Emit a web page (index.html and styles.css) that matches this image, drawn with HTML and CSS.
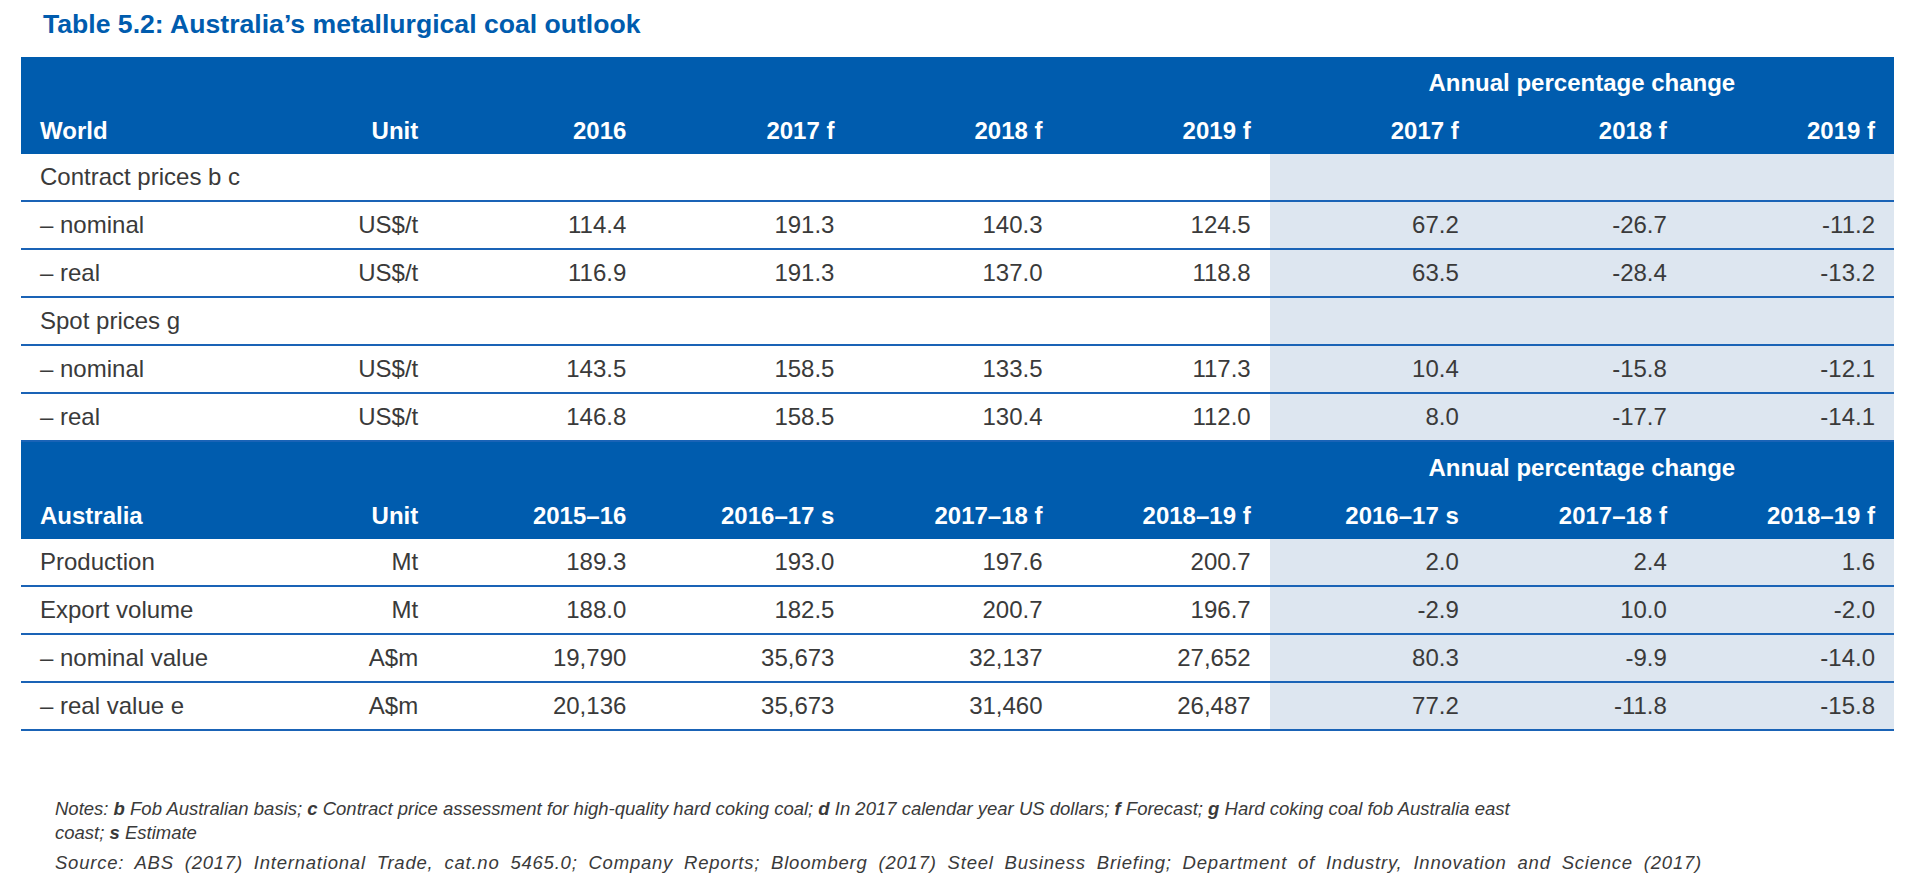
FILE: index.html
```html
<!DOCTYPE html>
<html lang="en">
<head>
<meta charset="utf-8">
<title>Table 5.2: Australia’s metallurgical coal outlook</title>
<link rel="stylesheet" href="styles.css">
</head>
<body>
<div class="page">
  <h1 class="title">Table 5.2: Australia’s metallurgical coal outlook</h1>
  <table class="outlook">
    <colgroup>
      <col><col><col><col><col><col><col><col><col>
    </colgroup>
    <tbody>
      <tr class="head-top">
        <th colspan="6"></th>
        <th colspan="3" class="apc">Annual percentage change</th>
      </tr>
      <tr class="head-main">
        <th class="lbl">World</th>
        <th>Unit</th>
        <th>2016</th>
        <th>2017 f</th>
        <th>2018 f</th>
        <th>2019 f</th>
        <th>2017 f</th>
        <th>2018 f</th>
        <th>2019 f</th>
      </tr>
      <tr>
        <td class="lbl">Contract prices b c</td>
        <td></td><td></td><td></td><td></td><td></td>
        <td class="sh"></td><td class="sh"></td><td class="sh"></td>
      </tr>
      <tr>
        <td class="lbl">– nominal</td>
        <td>US$/t</td><td>114.4</td><td>191.3</td><td>140.3</td><td>124.5</td>
        <td class="sh">67.2</td><td class="sh">-26.7</td><td class="sh">-11.2</td>
      </tr>
      <tr>
        <td class="lbl">– real</td>
        <td>US$/t</td><td>116.9</td><td>191.3</td><td>137.0</td><td>118.8</td>
        <td class="sh">63.5</td><td class="sh">-28.4</td><td class="sh">-13.2</td>
      </tr>
      <tr>
        <td class="lbl">Spot prices g</td>
        <td></td><td></td><td></td><td></td><td></td>
        <td class="sh"></td><td class="sh"></td><td class="sh"></td>
      </tr>
      <tr>
        <td class="lbl">– nominal</td>
        <td>US$/t</td><td>143.5</td><td>158.5</td><td>133.5</td><td>117.3</td>
        <td class="sh">10.4</td><td class="sh">-15.8</td><td class="sh">-12.1</td>
      </tr>
      <tr>
        <td class="lbl">– real</td>
        <td>US$/t</td><td>146.8</td><td>158.5</td><td>130.4</td><td>112.0</td>
        <td class="sh">8.0</td><td class="sh">-17.7</td><td class="sh">-14.1</td>
      </tr>
      <tr class="head-top">
        <th colspan="6"></th>
        <th colspan="3" class="apc">Annual percentage change</th>
      </tr>
      <tr class="head-main">
        <th class="lbl">Australia</th>
        <th>Unit</th>
        <th>2015–16</th>
        <th>2016–17 s</th>
        <th>2017–18 f</th>
        <th>2018–19 f</th>
        <th>2016–17 s</th>
        <th>2017–18 f</th>
        <th>2018–19 f</th>
      </tr>
      <tr>
        <td class="lbl">Production</td>
        <td>Mt</td><td>189.3</td><td>193.0</td><td>197.6</td><td>200.7</td>
        <td class="sh">2.0</td><td class="sh">2.4</td><td class="sh">1.6</td>
      </tr>
      <tr>
        <td class="lbl">Export volume</td>
        <td>Mt</td><td>188.0</td><td>182.5</td><td>200.7</td><td>196.7</td>
        <td class="sh">-2.9</td><td class="sh">10.0</td><td class="sh">-2.0</td>
      </tr>
      <tr>
        <td class="lbl">– nominal value</td>
        <td>A$m</td><td>19,790</td><td>35,673</td><td>32,137</td><td>27,652</td>
        <td class="sh">80.3</td><td class="sh">-9.9</td><td class="sh">-14.0</td>
      </tr>
      <tr>
        <td class="lbl">– real value e</td>
        <td>A$m</td><td>20,136</td><td>35,673</td><td>31,460</td><td>26,487</td>
        <td class="sh">77.2</td><td class="sh">-11.8</td><td class="sh">-15.8</td>
      </tr>
    </tbody>
  </table>
  <div class="notes">
    <p class="note">Notes: <b>b</b> Fob Australian basis; <b>c</b> Contract price assessment for high-quality hard coking coal; <b>d</b> In 2017 calendar year US dollars; <b>f</b> Forecast; <b>g</b> Hard coking coal fob Australia east coast; <b>s</b> Estimate</p>
    <p class="source">Source: ABS (2017) International Trade, cat.no 5465.0; Company Reports; Bloomberg (2017) Steel Business Briefing; Department of Industry, Innovation and Science (2017)</p>
  </div>
</div>
</body>
</html>
```

FILE: styles.css
```css
html, body {
  margin: 0;
  padding: 0;
  background: #ffffff;
}

.page {
  padding: 9px 0 0 21px;
  font-family: "Liberation Sans", Arial, sans-serif;
  color: #3a3a3a;
}

.title {
  margin: 0 0 18px 22px;
  font-size: 26.6px;
  line-height: 30px;
  font-weight: bold;
  color: #005cae;
}

.outlook {
  width: 1873px;
  table-layout: fixed;
  border-collapse: separate;
  border-spacing: 0;
  font-size: 24px;
}

.outlook th,
.outlook td {
  box-sizing: border-box;
  padding: 0 19px 0 19px;
  text-align: right;
  vertical-align: middle;
  white-space: nowrap;
}

.outlook th {
  background: #005cae;
  color: #ffffff;
  font-weight: bold;
}

.outlook .head-top th {
  height: 49px;
  padding-top: 2px;
}

.outlook .head-main th {
  height: 48px;
  padding-top: 2px;
}

.outlook th.apc {
  text-align: center;
}

.outlook td {
  height: 48px;
  border-bottom: 2px solid #1a63b6;
  color: #3a3a3a;
}

.outlook .lbl {
  text-align: left;
}

.outlook td.sh {
  background: #dde6f0;
}

.notes {
  margin: 66px 0 0 34px;
  font-style: italic;
  font-size: 18.5px;
  line-height: 24px;
  color: #3a3a3a;
}

.notes p {
  margin: 0;
}

.notes b {
  font-weight: bold;
}

.note {
  width: 1480px;
}

.source {
  margin-top: 6px !important;
  word-spacing: 5px;
  letter-spacing: 0.78px;
}
```
